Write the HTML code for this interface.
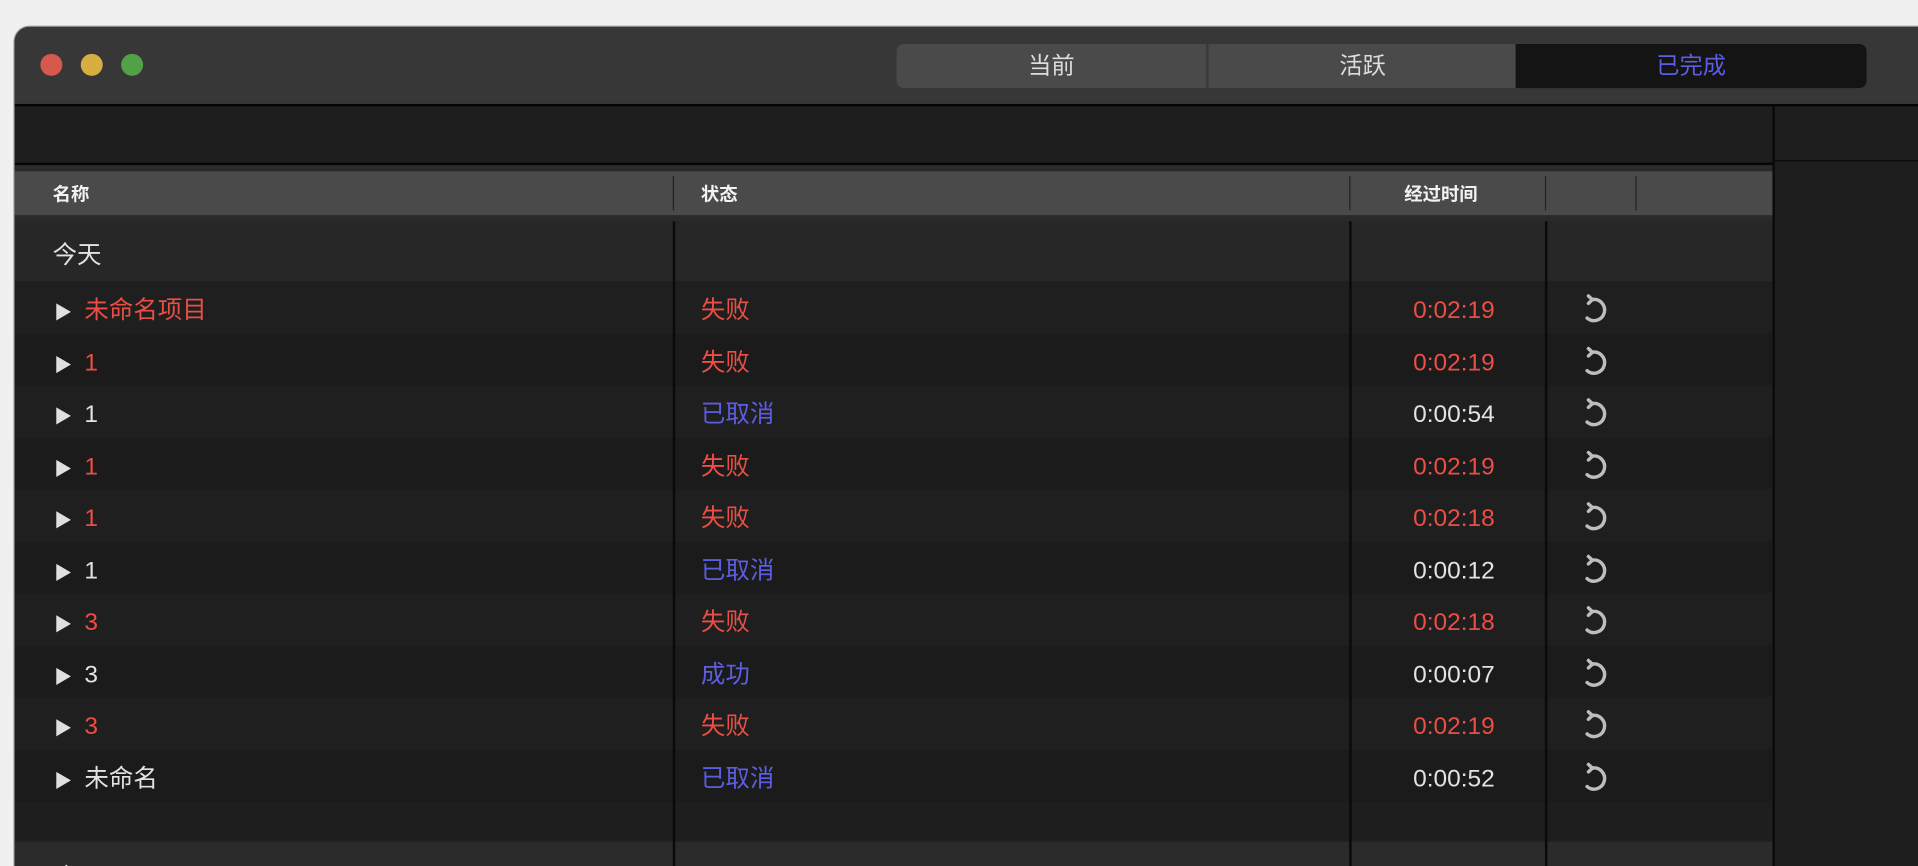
<!DOCTYPE html>
<html><head><meta charset="utf-8"><style>
html,body{margin:0;padding:0;background:#f0f0f0;overflow:hidden;width:1918px;height:866px}
#s{position:absolute;left:0;top:0;width:1568px;height:707.5px;overflow:hidden;transform:scale(1.22321);transform-origin:0 0;font-family:"Liberation Sans","Noto Sans CJK SC",sans-serif}
.a{position:absolute}
.win{left:12px;top:22px;width:1600px;height:690px;background:#1c1c1c;border-radius:12px 0 0 0;overflow:hidden;box-shadow:0 0 0 1px #9a9a9a}
.tl{width:18px;height:18px;border-radius:50%;top:22px}
.seg{top:14px;height:36px;color:#ddd;font-size:19px;text-align:center;line-height:38px}
.row{left:0;width:1437px;height:42.5px}
.t{position:absolute;top:3px;font-size:20px;line-height:42.5px}
.r{color:#ea4e45}.b{color:#5c5ee2}.w{color:#e2e2e2}
.tri{position:absolute;left:34px;top:18px;width:0;height:0;border-left:12px solid #e0e0e0;border-top:7px solid transparent;border-bottom:7px solid transparent}
.ic{position:absolute;left:1279px;top:10px}
.vl{width:2px;background:#0a0a0a}
</style></head><body><div id="s">
<div class="a win">
 <div class="a" style="left:0;top:0;width:1600px;height:63px;background:#373737"></div>
 <div class="a tl" style="left:21px;background:#d6594d"></div>
 <div class="a tl" style="left:54px;background:#d8ae40"></div>
 <div class="a tl" style="left:87px;background:#52a146"></div>
 <div class="a seg" style="left:721px;width:253px;background:#4a4a4a;border-radius:6px 0 0 6px">当前</div>
 <div class="a seg" style="left:975px;width:252px;background:#4a4a4a;border-left:1px solid #3a3a3a">活跃</div>
 <div class="a seg" style="left:1227px;width:287px;background:#141414;color:#5c5ee2;border-radius:0 6px 6px 0">已完成</div>
 <div class="a" style="left:0;top:63px;width:1600px;height:2px;background:#050505"></div>
 <div class="a" style="left:0;top:65px;width:1437px;height:46px;background:#1e1e1e"></div>
 <div class="a" style="left:0;top:111px;width:1437px;height:2px;background:#050505"></div>
 <div class="a" style="left:1437px;top:65px;width:2px;height:700px;background:#0a0a0a"></div>
 <div class="a" style="left:1439px;top:65px;width:200px;height:700px;background:#1e1e1e"></div>
 <div class="a" style="left:1439px;top:109px;width:200px;height:1px;background:#0a0a0a"></div>
 <div class="a" style="left:0;top:113px;width:1437px;height:5px;background:#2a2a2a"></div>
 <div class="a" style="left:0;top:118px;width:1437px;height:36px;background:#4a4a4a"></div>
 <div class="a" style="left:0;top:154px;width:1437px;height:5px;background:#2a2a2a"></div>
 <div class="a" style="left:31px;top:120px;line-height:36px;font-size:15px;color:#f2f2f2;font-weight:bold">名称</div>
 <div class="a" style="left:561px;top:120px;line-height:36px;font-size:15px;color:#f2f2f2;font-weight:bold">状态</div>
 <div class="a" style="left:1136px;top:120px;line-height:36px;font-size:15px;color:#f2f2f2;font-weight:bold">经过时间</div>
 <div class="a" style="left:538px;top:122px;width:1px;height:28px;background:#222"></div>
 <div class="a" style="left:1091px;top:122px;width:1px;height:28px;background:#222"></div>
 <div class="a" style="left:1251px;top:122px;width:1px;height:28px;background:#222"></div>
 <div class="a" style="left:1325px;top:122px;width:1px;height:28px;background:#222"></div>
 <div class="a" style="left:0;top:159px;width:1437px;height:49px;background:#272727"></div>
 <div class="a" style="left:31px;top:163px;line-height:49px;font-size:20px;color:#e2e2e2">今天</div>
 <div id="rows"></div>
 <div class="a" style="left:0;top:633px;width:1437px;height:33px;background:#1e1e1e"></div>
 <div class="a" style="left:0;top:666px;width:1437px;height:60px;background:#2b2b2b"></div>
 <div class="a" style="left:31px;top:676px;font-size:20px;color:#e2e2e2;line-height:40px">昨天</div>
 <div class="a vl" style="left:538px;top:159px;height:600px"></div>
 <div class="a vl" style="left:1091px;top:159px;height:600px"></div>
 <div class="a vl" style="left:1251px;top:159px;height:600px"></div>
</div>
</div>
<script>
var d=[["未命名项目","r","失败","r","0:02:19","r"],["1","r","失败","r","0:02:19","r"],["1","w","已取消","b","0:00:54","w"],["1","r","失败","r","0:02:19","r"],["1","r","失败","r","0:02:18","r"],["1","w","已取消","b","0:00:12","w"],["3","r","失败","r","0:02:18","r"],["3","w","成功","b","0:00:07","w"],["3","r","失败","r","0:02:19","r"],["未命名","w","已取消","b","0:00:52","w"]];
var h="";var ic='<svg class="ic" width="26" height="26" viewBox="0 0 24 24" fill="none" stroke="#bdbdbd" stroke-width="2.6" stroke-linecap="round" stroke-linejoin="round"><path d="M9.5 4.6 A8 8 0 1 1 6 18.5"/><path d="M7 1.8 L10 4.6 L7 7.4"/></svg>';
d.forEach(function(r,i){var top=208+42.5*i;h+='<div class="a row" style="top:'+top+'px;background:'+(i%2?'#1b1b1b':'#1f1f1f')+'"><div class="tri"></div><div class="t '+r[1]+'" style="left:57px">'+r[0]+'</div><div class="t '+r[3]+'" style="left:561px">'+r[2]+'</div><div class="t '+r[5]+'" style="left:1100px;width:110px;text-align:right">'+r[4]+'</div>'+ic+'</div>';});
document.getElementById("rows").outerHTML=h;
</script>
</body></html>
